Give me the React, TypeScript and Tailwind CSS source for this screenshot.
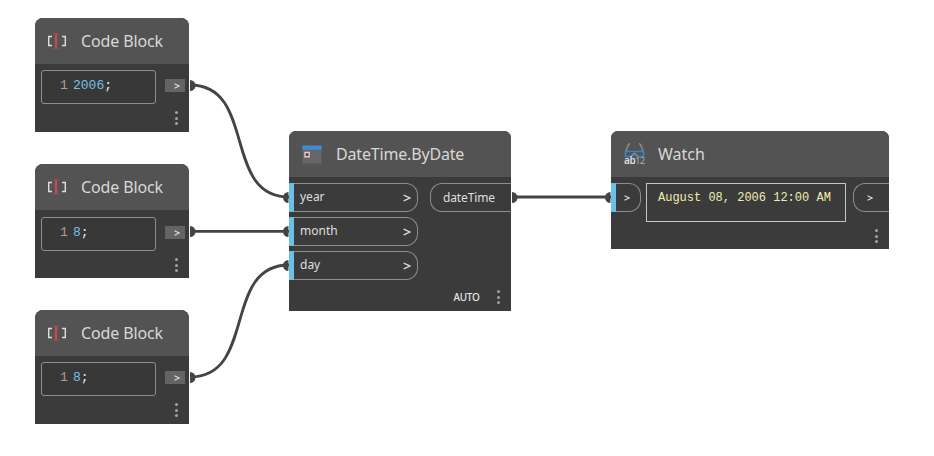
import React from "react";

const SANS = "font-['Noto_Sans','Open_Sans',sans-serif]";

function Dots({ className = "" }: { className?: string }) {
  return (
    <div className={`flex w-[3px] flex-col items-center gap-[2.5px] ${className}`}>
      <i className="h-[3px] w-[3px] rounded-full bg-[#a2a2a2]" />
      <i className="h-[3px] w-[3px] rounded-full bg-[#a2a2a2]" />
      <i className="h-[3px] w-[3px] rounded-full bg-[#a2a2a2]" />
    </div>
  );
}

function Chevron({ className = "", size = 7 }: { className?: string; size?: number }) {
  return (
    <svg width={size} height={size} viewBox="0 0 7 7" className={className} fill="none" stroke="#dcdcdc" strokeWidth="1.2">
      <path d="M.6 .9 6 3.5 .6 6.1" />
    </svg>
  );
}

function BracketIcon() {
  return (
    <svg width="20" height="18" viewBox="0 0 20 18" fill="none">
      <path d="M5 4.500H1.700V13.500H5M15 4.500h3.300v9H15" stroke="#dedede" strokeWidth="1.4" />
      <path d="M9 2V16" stroke="#c94a4f" strokeWidth="2.200" />
      <path d="M6.200 1.700h5.600M6.200 16.300h5.600" stroke="#a8484c" strokeWidth="1.1" />
    </svg>
  );
}

function CalendarIcon() {
  return (
    <svg width="20" height="19" viewBox="0 0 20 19" className="ml-px shrink-0">
      <path d="M.5 1h19v17.500H.5z" fill="#646669" />
      <path d="M.5 .5h19v4.300H.5z" fill="#428bd0" />
      <path d="M3 7.500h4.200v4.300H3z" fill="#4d4041" stroke="#efc9c4" strokeWidth="1.400" />
    </svg>
  );
}

function WatchIcon() {
  return (
    <div className="relative ml-px h-[23px] w-[22px] shrink-0">
      <svg width="22" height="18" viewBox="0 0 22 18" fill="none">
        <path d="M6 .8C4 .8 3.800 3 3 5.500L1.500 8.500M15 .8c2 0 2.200 2.200 3 4.700l1.500 3" stroke="#898c90" strokeWidth="1.500" />
        <path d="M1 8.500h19M1.500 8.500V14M19.500 8.500V14M1.500 13.500h6l3-2.700 3 2.700h6" stroke="#3e82bd" strokeWidth="1.700" />
        <path d="m7 13 3.500-3 3.500 3" stroke="#7c8a96" strokeWidth="1.300" />
      </svg>
      <div className="absolute left-0 top-[11px] flex items-baseline text-[10px] font-semibold leading-[12px] tracking-[-0.4px] text-[#dedede]">
        ab<span className="text-[9px] font-normal text-[#b2b2b2]">12</span>
      </div>
    </div>
  );
}

function Header({ icon, title, tone }: { icon: React.ReactNode; title: string; tone: string }) {
  return (
    <header className="flex h-[46px] shrink-0 items-center bg-[#535353] pl-3">
      <div className="flex w-[34px] shrink-0 items-center">{icon}</div>
      <h2 className={`whitespace-nowrap text-[16px] leading-[22px] text-[#d8d8d8] ${tone}`}>{title}</h2>
    </header>
  );
}

function CodeBlock({ code, place, pad }: { code: string; place: string; pad: string }) {
  return (
    <section className={`absolute left-[35px] flex h-[114px] w-[154px] flex-col overflow-hidden rounded-t-[8px] bg-[#3b3b3b] ${place}`}>
      <Header icon={<BracketIcon />} title="Code Block" tone="tracking-[-0.12px]" />
      <div className={`flex items-start pl-[6px] ${pad}`}>
        <div className="flex h-[34px] w-[115px] rounded-[3px] border border-[#8e8e8e] bg-[#383838] pl-[18px] pt-[7px] font-['Liberation_Mono',monospace] text-[13px] leading-[16px]">
          <span className="w-[13px] text-[#a0a0a0]">1</span>
          <span className="text-[#79bfe5]">{code}</span>
          <span className="text-[#eeeeee]">;</span>
        </div>
        <div className="ml-[9px] mt-[9px] flex h-[13px] w-5 items-center justify-end bg-[#646464] pr-[5px] pt-px">
          <Chevron size={6} />
        </div>
      </div>
      <Dots className="ml-[139.5px] mt-[7px]" />
    </section>
  );
}

function InputPort({ name }: { name: string }) {
  return (
    <div className="flex h-[29px] w-[129px] items-center rounded-r-[12px] border-y border-r border-[#8d8d8d] pr-[6px]">
      <i className="-my-px mr-[6px] h-[29px] w-[5px] bg-[#6ac0e7]" />
      <span className="flex-1 pb-px text-[12px] leading-4 text-[#dfdfdf]">{name}</span>
      <Chevron size={8} />
    </div>
  );
}

export default function App() {
  return (
    <main className={`relative h-[456px] w-[934px] overflow-hidden bg-white ${SANS}`}>
      <CodeBlock code="2006" place="top-[18px]" pad="pt-[6px]" />
      <CodeBlock code="8" place="top-[164px]" pad="pt-[7px]" />
      <CodeBlock code="8" place="top-[310px]" pad="pt-[6px]" />

      <section className="absolute left-[289px] top-[131px] flex h-[180px] w-[222px] flex-col overflow-hidden rounded-t-[7px] bg-[#3b3b3b]">
        <Header icon={<CalendarIcon />} title="DateTime.ByDate" tone="ml-[1px] tracking-[-0.17px]" />
        <div className="flex justify-between pt-[6px]">
          <div className="flex flex-col gap-[5px]">
            <InputPort name="year" />
            <InputPort name="month" />
            <InputPort name="day" />
          </div>
          <div className="flex h-[29px] w-[81px] items-center rounded-l-[12px] border-y border-l border-[#8d8d8d] pl-[12px] text-[12px] tracking-[-0.12px] text-[#dfdfdf]">
            dateTime
          </div>
        </div>
        <div className="mt-[9px] flex h-[16px] items-center justify-end gap-[17.5px] pr-[11px]">
          <span className="text-[10px] font-medium leading-4 tracking-[-0.3px] text-[#e5e5e5]">AUTO</span>
          <Dots />
        </div>
      </section>

      <section className="absolute left-[611px] top-[131px] flex h-[118px] w-[278px] flex-col overflow-hidden rounded-t-[7px] bg-[#3b3b3b]">
        <Header icon={<WatchIcon />} title="Watch" tone="ml-[1px]" />
        <div className="flex items-start pt-[6px]">
          <div className="flex h-[29px] w-[30px] items-center rounded-r-[12px] border-y border-r border-[#8d8d8d]">
            <i className="-my-px mr-[7.5px] h-[29px] w-[5px] bg-[#6ac0e7]" />
            <Chevron size={6} />
          </div>
          <div className="ml-[5px] h-[39px] w-[200px] whitespace-nowrap border border-[#c6c6c6] pl-[11px] pt-[6px] font-['Liberation_Mono',monospace] text-[12px] leading-4 text-[#efefad]">
            August 08, 2006 12:00 AM
          </div>
          <div className="ml-[7px] flex h-[29px] flex-1 items-center rounded-l-[12px] border-y border-l border-[#8d8d8d] pl-[12.5px]">
            <Chevron size={6} />
          </div>
        </div>
        <Dots className="ml-[264px] mt-[7px]" />
      </section>

      <svg className="absolute inset-0" width="934" height="456" fill="none">
        <g stroke="#444" strokeWidth="2.800">
          <path d="M190 85C257 85 222 197 289 197" />
          <path d="M190 231.300H289" />
          <path d="M190 377C257 377 222 265 289 265" />
          <path d="M512 197H611" />
        </g>
        <g fill="#444">
          <path d="M190 80a5.500 5.500 0 0 1 0 11zM190 226a5.500 5.500 0 0 1 0 11zM190 372a5.500 5.500 0 0 1 0 11zM512 192a5.500 5.500 0 0 1 0 11z" />
          <path d="M288.500 192a5.500 5.500 0 0 0 0 11zM288.500 226a5.500 5.500 0 0 0 0 11zM288.500 260a5.500 5.500 0 0 0 0 11zM610.500 192a5.500 5.500 0 0 0 0 11z" />
        </g>
      </svg>
    </main>
  );
}
